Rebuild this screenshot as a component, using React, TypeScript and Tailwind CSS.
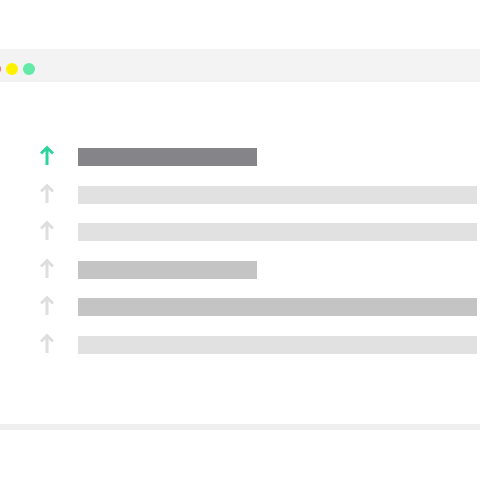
import React from 'react';

type Row = { active?: boolean; width: 'short' | 'full'; tone: 'dark' | 'mid' | 'light' };

const rows: Row[] = [
  { active: true, width: 'short', tone: 'dark' },
  { width: 'full', tone: 'light' },
  { width: 'full', tone: 'light' },
  { width: 'short', tone: 'mid' },
  { width: 'full', tone: 'mid' },
  { width: 'full', tone: 'light' },
];

function UpArrow({ active }: { active?: boolean }) {
  return (
    <svg
      width="14"
      height="20"
      viewBox="0 0 14 20"
      className={'-mt-[3px] shrink-0 ' + (active ? 'text-[#2fd49c]' : 'text-[#dedede]')}
    >
      <path d="M7 20V2.5M1 8.5l6-6 6 6" fill="none" stroke="currentColor" strokeWidth="3" />
    </svg>
  );
}

export default function App() {
  return (
    <div className="w-[480px] h-[480px] bg-white overflow-hidden pt-[49px]">
      {/* title bar */}
      <div className="h-[33px] bg-[#f3f3f3] flex items-center">
        <div className="flex gap-[5px] ml-[-11px] mt-[7px]">
          <span className="w-[12px] h-[12px] rounded-full bg-[#ff6b6b]" />
          <span className="w-[12px] h-[12px] rounded-full bg-[#fff200]" />
          <span className="w-[12px] h-[12px] rounded-full bg-[#62eaa8]" />
        </div>
      </div>

      {/* window body */}
      <div className="h-[342px] pt-[66px] pl-[40px] pr-[3px] flex flex-col gap-[19.5px]">
        {rows.map((r, i) => (
          <div key={i} className="flex items-start gap-[24px] h-[18px]">
            <UpArrow active={r.active} />
            <div
              className={[
                'h-[18px]',
                r.width === 'short' ? 'w-[179px]' : 'flex-1',
                r.tone === 'dark' ? 'bg-[#858489]' : r.tone === 'mid' ? 'bg-[#c4c4c4]' : 'bg-[#e1e1e1]',
              ].join(' ')}
            />
          </div>
        ))}
      </div>

      <div className="h-[6px] bg-[#efefef]" />
    </div>
  );
}
